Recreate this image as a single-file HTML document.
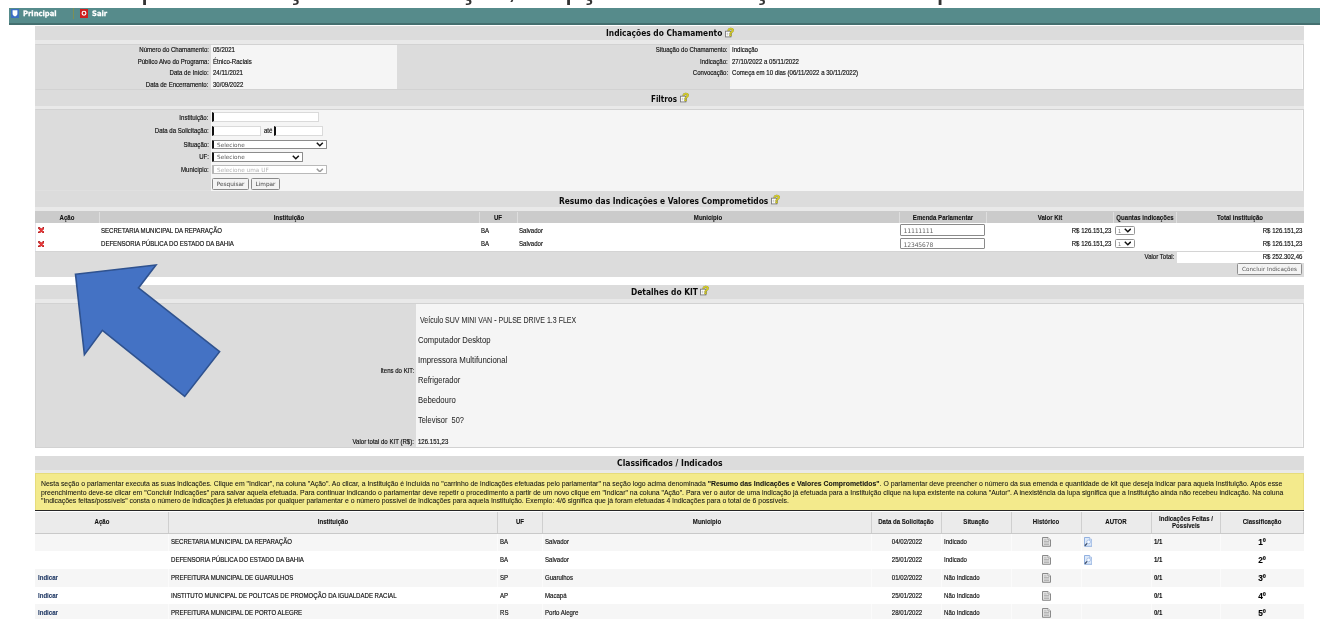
<!DOCTYPE html>
<html lang="pt-BR"><head><meta charset="utf-8"><title>Indicações do Chamamento</title>
<style>
html,body{margin:0;padding:0;background:#fff}
#page{position:absolute;left:0;top:0;width:1328px;height:642px;overflow:hidden;will-change:transform}
body{width:1328px;height:642px;overflow:hidden;position:relative;font-family:"Liberation Sans",sans-serif;font-size:7.4px;color:#111}
.b{position:absolute;box-sizing:border-box}
.t{position:absolute;white-space:pre;display:block;-webkit-text-stroke:.18px currentColor}
.bd{font-weight:bold}
.yp{-webkit-text-stroke:.06px currentColor}
.bd,.lnk{-webkit-text-stroke:.1px currentColor}
.hd{position:absolute;margin:0;white-space:nowrap;font:bold 9.2px/14px "DejaVu Sans Condensed","DejaVu Sans","Liberation Sans",sans-serif;color:#0a0a0a;transform-origin:0 50%}
.nav{position:absolute;left:9px;top:8px;width:1311px;height:17px;background:#568b8b;border-bottom:2px solid #446f6f;box-sizing:border-box}
.nv{position:absolute;white-space:nowrap;font:bold 7.4px/10px "DejaVu Sans",sans-serif;color:#fff;transform-origin:0 50%;transform:scaleX(.92);-webkit-text-stroke:.25px #fff}
.kit{font-size:9.4px;color:#2a2a2a;-webkit-text-stroke:.05px currentColor}
.in{position:absolute;box-sizing:border-box;background:#fff;border:1px solid #dadada;border-left:2px solid #111;margin:0;padding:0 2px;outline:0;border-radius:0;font:6px "Liberation Sans",sans-serif}
.sel{position:absolute;box-sizing:border-box;background:#fff;border:1px solid #8c8c8c;border-left:2px solid #111;border-radius:1px}
.btn{position:absolute;box-sizing:border-box;background:#f3f3f3;border:1px solid #8a8a8a;border-radius:1.5px;margin:0;padding:0 0 1px;line-height:8px;text-align:center;white-space:nowrap;overflow:hidden}
.sm{font-family:"DejaVu Sans","Liberation Sans",sans-serif;font-size:5.75px;color:#666}
.lnk{color:#1f3864;font-weight:bold;text-decoration:none}
.em{position:absolute;box-sizing:border-box;width:85px;height:11.5px;margin:0;padding:1px 0 0 2.6px;outline:0;background:#fff;border:1px solid #8a8a8a;border-radius:1px;font:6.3px "DejaVu Sans Mono","Liberation Mono",monospace;letter-spacing:-.1px;color:#666}
</style></head><body>
<div id="page">

<div class="b" style="left:0;top:-29.2px;width:1328px;height:36px;overflow:hidden;font:32px/32px 'Liberation Sans',sans-serif;color:#333">
<span style="position:absolute;left:140.9px;top:0">p</span>
<span style="position:absolute;left:287px;top:0">ç</span>
<span style="position:absolute;left:459.8px;top:0">ç</span>
<span style="position:absolute;left:507.6px;top:0">,</span>
<span style="position:absolute;left:564.9px;top:0">p</span>
<span style="position:absolute;left:580.4px;top:0">ç</span>
<span style="position:absolute;left:753.3px;top:0">ç</span>
<span style="position:absolute;left:936.4px;top:0">p</span>
</div>
<div class="nav">
<svg style="position:absolute;left:1.6px;top:1px" width="8" height="9" viewBox="0 0 8 9"><rect width="8" height="9" fill="#3b6fc4"/><path d="M1.6 1.2h4.8v3.6c0 1.3-1.2 2.2-2.4 2.6C2.8 7 1.6 6.100 1.600 4.800z" fill="#fff"/></svg>
<span class="nv" style="left:14.2px;top:0.6px">Principal</span>
<div class="b" style="left:63.6px;top:0;width:1px;height:11px;background:#7d8f55"></div>
<svg style="position:absolute;left:71px;top:.6px" width="8" height="9.2" viewBox="0 0 8 9.2"><rect width="8" height="9.2" fill="#cf1f1f"/><circle cx="4" cy="4.200" r="1.900" fill="none" stroke="#fff" stroke-width="1.150"/></svg>
<span class="nv" style="left:83px;top:0.6px">Sair</span>
</div>
<div class="b " style="left:35.00px;top:26.00px;width:1269.00px;height:14.00px;background:#dcdcdc;"></div>
<div class="b " style="left:35.00px;top:40.00px;width:1269.00px;height:4.00px;background:#e9e9e9;"></div>
<h2 class="hd" style="left:605.80px;top:26.31px;transform:scaleX(0.9079)">Indicações do Chamamento</h2>
<svg class="hi" style="position:absolute;left:724.80px;top:26.70px" width="10" height="11" viewBox="0 0 10 11"><rect x=".5" y="4.200" width="5.400" height="5.700" fill="#fff" stroke="#7a7a7a" stroke-width=".9"/><path d="M1.700 6.300h1.600M1.700 7.800h1.600" stroke="#a0a0a0" stroke-width=".7"/><text x="2.300" y="9.200" font-family="Liberation Sans, sans-serif" font-weight="bold" font-size="11.500" fill="#d6cd1d" stroke="#6e6a10" stroke-width=".5" paint-order="stroke">?</text></svg>
<div class="b " style="left:35.00px;top:44.00px;width:1269.00px;height:46.00px;background:#dcdcdc;border:1px solid #d2d2d2;border-left-color:#dcdcdc"></div>
<div class="b " style="left:211.00px;top:45.00px;width:186.00px;height:44.00px;background:#f5f5f5;"></div>
<div class="b " style="left:730.00px;top:45.00px;width:573.00px;height:44.00px;background:#f5f5f5;border-right:1px solid #fafafa"></div>
<span class="t " style="top:45.40px;line-height:10px;right:1119.25px;transform-origin:100% 50%;transform:scaleX(0.82);">Número do Chamamento:</span>
<span class="t " style="top:45.40px;line-height:10px;left:212.75px;transform-origin:0 50%;transform:scaleX(0.82);">05/2021</span>
<span class="t " style="top:56.82px;line-height:10px;right:1119.25px;transform-origin:100% 50%;transform:scaleX(0.82);">Público Alvo do Programa:</span>
<span class="t " style="top:56.82px;line-height:10px;left:212.75px;transform-origin:0 50%;transform:scaleX(0.82);">Étnico-Raciais</span>
<span class="t " style="top:68.24px;line-height:10px;right:1119.25px;transform-origin:100% 50%;transform:scaleX(0.82);">Data de Início:</span>
<span class="t " style="top:68.24px;line-height:10px;left:212.75px;transform-origin:0 50%;transform:scaleX(0.82);">24/11/2021</span>
<span class="t " style="top:79.66px;line-height:10px;right:1119.25px;transform-origin:100% 50%;transform:scaleX(0.82);">Data de Encerramento:</span>
<span class="t " style="top:79.66px;line-height:10px;left:212.75px;transform-origin:0 50%;transform:scaleX(0.82);">30/09/2022</span>
<span class="t " style="top:45.40px;line-height:10px;right:600.20px;transform-origin:100% 50%;transform:scaleX(0.82);">Situação do Chamamento:</span>
<span class="t " style="top:45.40px;line-height:10px;left:732.00px;transform-origin:0 50%;transform:scaleX(0.82);">Indicação</span>
<span class="t " style="top:56.82px;line-height:10px;right:600.20px;transform-origin:100% 50%;transform:scaleX(0.82);">Indicação:</span>
<span class="t " style="top:56.82px;line-height:10px;left:732.00px;transform-origin:0 50%;transform:scaleX(0.82);">27/10/2022 a 05/11/2022</span>
<span class="t " style="top:68.24px;line-height:10px;right:600.20px;transform-origin:100% 50%;transform:scaleX(0.82);">Convocação:</span>
<span class="t " style="top:68.24px;line-height:10px;left:732.00px;transform-origin:0 50%;transform:scaleX(0.82);">Começa em 10 dias (06/11/2022 a 30/11/2022)</span>
<div class="b " style="left:35.00px;top:90.00px;width:1269.00px;height:16.00px;background:#dcdcdc;"></div>
<div class="b " style="left:35.00px;top:106.00px;width:1269.00px;height:3.00px;background:#e9e9e9;"></div>
<h2 class="hd" style="left:651.00px;top:91.61px;transform:scaleX(0.868)">Filtros</h2>
<svg class="hi" style="position:absolute;left:679.70px;top:92.00px" width="10" height="11" viewBox="0 0 10 11"><rect x=".5" y="4.200" width="5.400" height="5.700" fill="#fff" stroke="#7a7a7a" stroke-width=".9"/><path d="M1.700 6.300h1.600M1.700 7.800h1.600" stroke="#a0a0a0" stroke-width=".7"/><text x="2.300" y="9.200" font-family="Liberation Sans, sans-serif" font-weight="bold" font-size="11.500" fill="#d6cd1d" stroke="#6e6a10" stroke-width=".5" paint-order="stroke">?</text></svg>
<div class="b " style="left:35.00px;top:109.00px;width:1269.00px;height:82.00px;background:#dcdcdc;border:1px solid #d2d2d2;border-left-color:#dcdcdc;border-bottom-color:#e0e0e0"></div>
<div class="b " style="left:211.00px;top:110.00px;width:1092.00px;height:81.00px;background:#f5f5f5;border-right:1px solid #fafafa"></div>
<span class="t " style="top:112.90px;line-height:10px;right:1119.25px;transform-origin:100% 50%;transform:scaleX(0.82);">Instituição:</span>
<span class="t " style="top:126.15px;line-height:10px;right:1119.25px;transform-origin:100% 50%;transform:scaleX(0.82);">Data da Solicitação:</span>
<span class="t " style="top:140.15px;line-height:10px;right:1119.25px;transform-origin:100% 50%;transform:scaleX(0.82);">Situação:</span>
<span class="t " style="top:152.40px;line-height:10px;right:1119.25px;transform-origin:100% 50%;transform:scaleX(0.82);">UF:</span>
<span class="t " style="top:165.40px;line-height:10px;right:1119.25px;transform-origin:100% 50%;transform:scaleX(0.82);">Município:</span>
<input type="text" class="in" aria-label="Instituição" style="left:212px;top:112px;width:107px;height:10px">
<input type="text" class="in" aria-label="Data inicial" style="left:212px;top:126px;width:49.4px;height:10px">
<span class="t " style="top:125.90px;line-height:10px;left:263.75px;transform-origin:0 50%;transform:scaleX(0.82);">até</span>
<input type="text" class="in" aria-label="Data final" style="left:274px;top:126px;width:48.6px;height:10px">
<div class="sel" style="left:212px;top:140px;width:115px;height:9px;"><span class="sm" style="position:absolute;left:3px;top:50%;margin-top:-4px;line-height:8px;color:#5a5a5a;white-space:nowrap">Selecione</span><svg style="position:absolute;right:2.4px;top:50%;margin-top:-2.2px" width="7.6" height="4.8" viewBox="0 0 7.6 4.8"><path d="M.8 .8L3.800 3.800 6.800 .8" fill="none" stroke="#111" stroke-width="1.5"/></svg></div>
<div class="sel" style="left:212px;top:152px;width:91px;height:10px;"><span class="sm" style="position:absolute;left:3px;top:50%;margin-top:-4px;line-height:8px;color:#5a5a5a;white-space:nowrap">Selecione</span><svg style="position:absolute;right:2.4px;top:50%;margin-top:-2.2px" width="7.6" height="4.8" viewBox="0 0 7.6 4.8"><path d="M.8 .8L3.800 3.800 6.800 .8" fill="none" stroke="#111" stroke-width="1.5"/></svg></div>
<div class="sel" style="left:212px;top:165px;width:115px;height:9.4px;border-color:#b9b9b9;border-left:2px solid #b4b4b4;"><span class="sm" style="position:absolute;left:3px;top:50%;margin-top:-4px;line-height:8px;color:#b3b3b3;white-space:nowrap">Selecione uma UF</span><svg style="position:absolute;right:2.4px;top:50%;margin-top:-2.2px" width="7.6" height="4.8" viewBox="0 0 7.6 4.8"><path d="M.8 .8L3.800 3.800 6.800 .8" fill="none" stroke="#9a9a9a" stroke-width="1.5"/></svg></div>
<button type="button" class="btn sm" style="left:212px;top:178px;width:37px;height:12px;color:#444">Pesquisar</button>
<button type="button" class="btn sm" style="left:251px;top:178px;width:29px;height:12px;color:#444">Limpar</button>
<div class="b " style="left:35.00px;top:191.00px;width:1269.00px;height:16.00px;background:#dcdcdc;"></div>
<div class="b " style="left:35.00px;top:207.00px;width:1269.00px;height:4.00px;background:#e9e9e9;"></div>
<h2 class="hd" style="left:559.40px;top:193.91px;transform:scaleX(0.9064)">Resumo das Indicações e Valores Comprometidos</h2>
<svg class="hi" style="position:absolute;left:771.40px;top:194.30px" width="10" height="11" viewBox="0 0 10 11"><rect x=".5" y="4.200" width="5.400" height="5.700" fill="#fff" stroke="#7a7a7a" stroke-width=".9"/><path d="M1.700 6.300h1.600M1.700 7.800h1.600" stroke="#a0a0a0" stroke-width=".7"/><text x="2.300" y="9.200" font-family="Liberation Sans, sans-serif" font-weight="bold" font-size="11.500" fill="#d6cd1d" stroke="#6e6a10" stroke-width=".5" paint-order="stroke">?</text></svg>
<div class="b " style="left:35.00px;top:211.00px;width:1269.00px;height:12.00px;background:#cbcbcb;"></div>
<div class="b " style="left:99.00px;top:212.00px;width:1.00px;height:11.00px;background:#dedede;"></div>
<div class="b " style="left:479.00px;top:212.00px;width:1.00px;height:11.00px;background:#dedede;"></div>
<div class="b " style="left:517.00px;top:212.00px;width:1.00px;height:11.00px;background:#dedede;"></div>
<div class="b " style="left:899.00px;top:212.00px;width:1.00px;height:11.00px;background:#dedede;"></div>
<div class="b " style="left:986.00px;top:212.00px;width:1.00px;height:11.00px;background:#dedede;"></div>
<div class="b " style="left:1113.00px;top:212.00px;width:1.00px;height:11.00px;background:#dedede;"></div>
<div class="b " style="left:1176.00px;top:212.00px;width:1.00px;height:11.00px;background:#dedede;"></div>
<span class="t bd" style="top:212.90px;line-height:10px;left:67.12px;transform-origin:0 50%;transform:scaleX(0.82) translateX(-50%);">Ação</span>
<span class="t bd" style="top:212.90px;line-height:10px;left:289.25px;transform-origin:0 50%;transform:scaleX(0.82) translateX(-50%);">Instituição</span>
<span class="t bd" style="top:212.90px;line-height:10px;left:498.38px;transform-origin:0 50%;transform:scaleX(0.82) translateX(-50%);">UF</span>
<span class="t bd" style="top:212.90px;line-height:10px;left:708.25px;transform-origin:0 50%;transform:scaleX(0.82) translateX(-50%);">Município</span>
<span class="t bd" style="top:212.90px;line-height:10px;left:942.62px;transform-origin:0 50%;transform:scaleX(0.82) translateX(-50%);">Emenda Parlamentar</span>
<span class="t bd" style="top:212.90px;line-height:10px;left:1049.62px;transform-origin:0 50%;transform:scaleX(0.82) translateX(-50%);">Valor Kit</span>
<span class="t bd" style="top:212.90px;line-height:10px;left:1144.75px;transform-origin:0 50%;transform:scaleX(0.82) translateX(-50%);">Quantas indicações</span>
<span class="t bd" style="top:212.90px;line-height:10px;left:1240.00px;transform-origin:0 50%;transform:scaleX(0.82) translateX(-50%);">Total instituição</span>
<div class="b " style="left:35.00px;top:223.00px;width:1269.00px;height:28.00px;background:#fff;border-left:1px solid #e4e6ee"></div>
<svg style="position:absolute;left:37.8px;top:226.8px" width="6.6" height="6.6" viewBox="0 0 10 10"><path d="M1.6 1.6L8.4 8.4M8.4 1.6L1.6 8.4" stroke="#a51d1d" stroke-width="3.2" stroke-linecap="round"/><path d="M2.6 2.6L7.4 7.4M7.4 2.6L2.6 7.4" stroke="#e8383a" stroke-width="2.6" stroke-linecap="round"/></svg>
<span class="t " style="top:225.50px;line-height:10px;left:100.50px;transform-origin:0 50%;transform:scaleX(0.82);">SECRETARIA MUNICIPAL DA REPARAÇÃO</span>
<span class="t " style="top:225.50px;line-height:10px;left:480.50px;transform-origin:0 50%;transform:scaleX(0.82);">BA</span>
<span class="t " style="top:225.50px;line-height:10px;left:518.75px;transform-origin:0 50%;transform:scaleX(0.82);">Salvador</span>
<input type="text" class="em" aria-label="Emenda Parlamentar" value="11111111" style="left:900px;top:224.2px">
<span class="t " style="top:225.50px;line-height:10px;right:216.25px;transform-origin:100% 50%;transform:scaleX(0.82);">R$ 126.151,23</span>
<div class="sel" style="left:1114.5px;top:226px;width:20.2px;height:9px;border:1px solid #959595;border-radius:1.5px"><span class="sm" style="position:absolute;left:2.5px;top:.5px;line-height:6px;font-size:5px;color:#777">1</span><svg style="position:absolute;right:2.4px;top:50%;margin-top:-2.2px" width="7.6" height="4.8" viewBox="0 0 7.6 4.8"><path d="M.8 .8L3.800 3.800 6.800 .8" fill="none" stroke="#111" stroke-width="1.5"/></svg></div>
<span class="t " style="top:225.50px;line-height:10px;right:26.00px;transform-origin:100% 50%;transform:scaleX(0.82);">R$ 126.151,23</span>
<svg style="position:absolute;left:37.8px;top:240.5px" width="6.6" height="6.6" viewBox="0 0 10 10"><path d="M1.6 1.6L8.4 8.4M8.4 1.6L1.6 8.4" stroke="#a51d1d" stroke-width="3.2" stroke-linecap="round"/><path d="M2.6 2.6L7.4 7.4M7.4 2.6L2.6 7.4" stroke="#e8383a" stroke-width="2.6" stroke-linecap="round"/></svg>
<span class="t " style="top:239.20px;line-height:10px;left:100.50px;transform-origin:0 50%;transform:scaleX(0.82);">DEFENSORIA PÚBLICA DO ESTADO DA BAHIA</span>
<span class="t " style="top:239.20px;line-height:10px;left:480.50px;transform-origin:0 50%;transform:scaleX(0.82);">BA</span>
<span class="t " style="top:239.20px;line-height:10px;left:518.75px;transform-origin:0 50%;transform:scaleX(0.82);">Salvador</span>
<input type="text" class="em" aria-label="Emenda Parlamentar" value="12345678" style="left:900px;top:237.9px">
<span class="t " style="top:239.20px;line-height:10px;right:216.25px;transform-origin:100% 50%;transform:scaleX(0.82);">R$ 126.151,23</span>
<div class="sel" style="left:1114.5px;top:239px;width:20.2px;height:9px;border:1px solid #959595;border-radius:1.5px"><span class="sm" style="position:absolute;left:2.5px;top:.5px;line-height:6px;font-size:5px;color:#777">1</span><svg style="position:absolute;right:2.4px;top:50%;margin-top:-2.2px" width="7.6" height="4.8" viewBox="0 0 7.6 4.8"><path d="M.8 .8L3.800 3.800 6.800 .8" fill="none" stroke="#111" stroke-width="1.5"/></svg></div>
<span class="t " style="top:239.20px;line-height:10px;right:26.00px;transform-origin:100% 50%;transform:scaleX(0.82);">R$ 126.151,23</span>
<div class="b " style="left:35.00px;top:251.00px;width:1269.00px;height:26.00px;background:#dcdcdc;border-top:1px solid #d4d4d4"></div>
<div class="b " style="left:1177.00px;top:252.00px;width:127.00px;height:11.00px;background:#fff;"></div>
<span class="t " style="top:252.30px;line-height:10px;right:153.25px;transform-origin:100% 50%;transform:scaleX(0.82);">Valor Total:</span>
<span class="t " style="top:252.30px;line-height:10px;right:26.00px;transform-origin:100% 50%;transform:scaleX(0.82);">R$ 252.302,46</span>
<button type="button" class="btn sm" style="left:1237px;top:263px;width:65px;height:12px;border-color:#8f8f8f;color:#555;font-size:5.65px">Concluir Indicações</button>
<div class="b " style="left:35.00px;top:285.00px;width:1269.00px;height:14.00px;background:#dcdcdc;"></div>
<div class="b " style="left:35.00px;top:299.00px;width:1269.00px;height:4.00px;background:#e9e9e9;"></div>
<h2 class="hd" style="left:630.50px;top:285.01px;transform:scaleX(0.9089)">Detalhes do KIT</h2>
<svg class="hi" style="position:absolute;left:700.20px;top:285.40px" width="10" height="11" viewBox="0 0 10 11"><rect x=".5" y="4.200" width="5.400" height="5.700" fill="#fff" stroke="#7a7a7a" stroke-width=".9"/><path d="M1.700 6.300h1.600M1.700 7.800h1.600" stroke="#a0a0a0" stroke-width=".7"/><text x="2.300" y="9.200" font-family="Liberation Sans, sans-serif" font-weight="bold" font-size="11.500" fill="#d6cd1d" stroke="#6e6a10" stroke-width=".5" paint-order="stroke">?</text></svg>
<div class="b " style="left:35.00px;top:303.00px;width:1269.00px;height:145.00px;background:#dcdcdc;border:1px solid #d2d2d2"></div>
<div class="b " style="left:416.00px;top:304.00px;width:887.00px;height:143.00px;background:#f5f5f5;border-right:1px solid #fafafa"></div>
<span class="t kit" style="top:313.90px;line-height:12px;left:419.50px;transform-origin:0 50%;transform:scaleX(0.7504);">Veículo SUV MINI VAN - PULSE DRIVE 1.3 FLEX</span>
<span class="t kit" style="top:333.90px;line-height:12px;left:417.75px;transform-origin:0 50%;transform:scaleX(0.8183);">Computador Desktop</span>
<span class="t kit" style="top:353.90px;line-height:12px;left:417.75px;transform-origin:0 50%;transform:scaleX(0.8355);">Impressora Multifuncional</span>
<span class="t kit" style="top:373.90px;line-height:12px;left:417.75px;transform-origin:0 50%;transform:scaleX(0.8108);">Refrigerador</span>
<span class="t kit" style="top:393.90px;line-height:12px;left:417.75px;transform-origin:0 50%;transform:scaleX(0.8229);">Bebedouro</span>
<span class="t kit" style="top:413.90px;line-height:12px;left:417.75px;transform-origin:0 50%;transform:scaleX(0.7952);">Televisor  50?</span>
<span class="t " style="top:365.70px;line-height:10px;right:913.75px;transform-origin:100% 50%;transform:scaleX(0.82);">Itens do KIT:</span>
<span class="t " style="top:436.70px;line-height:10px;right:913.75px;transform-origin:100% 50%;transform:scaleX(0.82);">Valor total do KIT (R$):</span>
<span class="t " style="top:436.70px;line-height:10px;left:418.25px;transform-origin:0 50%;transform:scaleX(0.82);">126.151,23</span>
<div class="b " style="left:35.00px;top:456.00px;width:1269.00px;height:14.00px;background:#dcdcdc;"></div>
<div class="b " style="left:35.00px;top:470.00px;width:1269.00px;height:3.00px;background:#e9e9e9;"></div>
<h2 class="hd" style="left:616.80px;top:456.01px;transform:scaleX(0.9275)">Classificados / Indicados</h2>
<div class="b " style="left:35.00px;top:473.00px;width:1269.00px;height:38.00px;background:#f3ea8c;border:1px solid #e6dc7c;border-bottom:none"></div>
<div class="b " style="left:35.00px;top:510.00px;width:1269.00px;height:1.00px;background:#262626;"></div>
<span class="t yp" style="top:479.40px;line-height:10px;left:40.50px;transform-origin:0 50%;transform:scaleX(0.9319);">Nesta seção o parlamentar executa as suas indicações. Clique em "Indicar", na coluna "Ação". Ao clicar, a Instituição é incluída no "carrinho de indicações efetuadas pelo parlamentar" na seção logo acima denominada <b>"Resumo das Indicações e Valores Comprometidos"</b>. O parlamentar deve preencher o número da sua emenda e quantidade de kit que deseja indicar para aquela Instituição. Após esse</span>
<span class="t yp" style="top:487.75px;line-height:10px;left:40.50px;transform-origin:0 50%;transform:scaleX(0.9304);">preenchimento deve-se clicar em "Concluir Indicações" para salvar aquela efetuada. Para continuar indicando o parlamentar deve repetir o procedimento a partir de um novo clique em "Indicar" na coluna "Ação". Para ver o autor de uma indicação já efetuada para a Instituição clique na lupa existente na coluna "Autor". A inexistência da lupa significa que a Instituição ainda não recebeu indicação. Na coluna</span>
<span class="t yp" style="top:496.10px;line-height:10px;left:40.50px;transform-origin:0 50%;transform:scaleX(0.9298);">"Indicações feitas/possíveis" consta o número de indicações já efetuadas por qualquer parlamentar e o número possível de indicações para aquela Instituição. Exemplo: 4/6 significa que já foram efetuadas 4 indicações para o total de 6 possíveis.</span>
<div class="b " style="left:35.00px;top:512.00px;width:1269.00px;height:22.00px;background:#ebebeb;border-bottom:1px solid #c9c9c9"></div>
<div class="b " style="left:168.00px;top:512.00px;width:1.00px;height:21.00px;background:#cfcfcf;"></div>
<div class="b " style="left:497.00px;top:512.00px;width:1.00px;height:21.00px;background:#cfcfcf;"></div>
<div class="b " style="left:542.00px;top:512.00px;width:1.00px;height:21.00px;background:#cfcfcf;"></div>
<div class="b " style="left:871.00px;top:512.00px;width:1.00px;height:21.00px;background:#cfcfcf;"></div>
<div class="b " style="left:941.00px;top:512.00px;width:1.00px;height:21.00px;background:#cfcfcf;"></div>
<div class="b " style="left:1011.00px;top:512.00px;width:1.00px;height:21.00px;background:#cfcfcf;"></div>
<div class="b " style="left:1081.00px;top:512.00px;width:1.00px;height:21.00px;background:#cfcfcf;"></div>
<div class="b " style="left:1151.00px;top:512.00px;width:1.00px;height:21.00px;background:#cfcfcf;"></div>
<div class="b " style="left:1220.00px;top:512.00px;width:1.00px;height:21.00px;background:#cfcfcf;"></div>
<div class="b " style="left:1303.00px;top:512.00px;width:1.00px;height:21.00px;background:#cfcfcf;"></div>
<span class="t bd" style="top:517.40px;line-height:10px;left:101.62px;transform-origin:0 50%;transform:scaleX(0.82) translateX(-50%);">Ação</span>
<span class="t bd" style="top:517.40px;line-height:10px;left:332.77px;transform-origin:0 50%;transform:scaleX(0.82) translateX(-50%);">Instituição</span>
<span class="t bd" style="top:517.40px;line-height:10px;left:519.80px;transform-origin:0 50%;transform:scaleX(0.82) translateX(-50%);">UF</span>
<span class="t bd" style="top:517.40px;line-height:10px;left:706.85px;transform-origin:0 50%;transform:scaleX(0.82) translateX(-50%);">Município</span>
<span class="t bd" style="top:517.40px;line-height:10px;left:906.35px;transform-origin:0 50%;transform:scaleX(0.82) translateX(-50%);">Data da Solicitação</span>
<span class="t bd" style="top:517.40px;line-height:10px;left:976.40px;transform-origin:0 50%;transform:scaleX(0.82) translateX(-50%);">Situação</span>
<span class="t bd" style="top:517.40px;line-height:10px;left:1046.40px;transform-origin:0 50%;transform:scaleX(0.82) translateX(-50%);">Histórico</span>
<span class="t bd" style="top:517.40px;line-height:10px;left:1116.20px;transform-origin:0 50%;transform:scaleX(0.82) translateX(-50%);">AUTOR</span>
<span class="t bd" style="top:517.40px;line-height:10px;left:1262.10px;transform-origin:0 50%;transform:scaleX(0.82) translateX(-50%);">Classificação</span>
<span class="t bd" style="top:514.00px;line-height:10px;left:1185.90px;transform-origin:0 50%;transform:scaleX(0.82) translateX(-50%);">Indicações Feitas /</span>
<span class="t bd" style="top:521.30px;line-height:10px;left:1185.90px;transform-origin:0 50%;transform:scaleX(0.82) translateX(-50%);">Possíveis</span>
<div class="b " style="left:35.00px;top:534.00px;width:1269.00px;height:17.00px;background:#f6f6f6;"></div>
<div class="b " style="left:168.00px;top:534.00px;width:1.00px;height:17.00px;background:#fbfbfb;"></div>
<div class="b " style="left:497.00px;top:534.00px;width:1.00px;height:17.00px;background:#fbfbfb;"></div>
<div class="b " style="left:542.00px;top:534.00px;width:1.00px;height:17.00px;background:#fbfbfb;"></div>
<div class="b " style="left:871.00px;top:534.00px;width:1.00px;height:17.00px;background:#fbfbfb;"></div>
<div class="b " style="left:941.00px;top:534.00px;width:1.00px;height:17.00px;background:#fbfbfb;"></div>
<div class="b " style="left:1011.00px;top:534.00px;width:1.00px;height:17.00px;background:#fbfbfb;"></div>
<div class="b " style="left:1081.00px;top:534.00px;width:1.00px;height:17.00px;background:#fbfbfb;"></div>
<div class="b " style="left:1151.00px;top:534.00px;width:1.00px;height:17.00px;background:#fbfbfb;"></div>
<div class="b " style="left:1220.00px;top:534.00px;width:1.00px;height:17.00px;background:#fbfbfb;"></div>
<span class="t " style="top:537.25px;line-height:10px;left:171.25px;transform-origin:0 50%;transform:scaleX(0.82);">SECRETARIA MUNICIPAL DA REPARAÇÃO</span>
<span class="t " style="top:537.25px;line-height:10px;left:500.40px;transform-origin:0 50%;transform:scaleX(0.82);">BA</span>
<span class="t " style="top:537.25px;line-height:10px;left:545.40px;transform-origin:0 50%;transform:scaleX(0.82);">Salvador</span>
<span class="t " style="top:537.25px;line-height:10px;left:906.80px;transform-origin:0 50%;transform:scaleX(0.82) translateX(-50%);">04/02/2022</span>
<span class="t " style="top:537.25px;line-height:10px;left:944.40px;transform-origin:0 50%;transform:scaleX(0.82);">Indicado</span>
<svg style="position:absolute;left:1042px;top:536.9px" width="9" height="10" viewBox="0 0 9 10"><path d="M.5 .5H6L8.500 3V9.300H.5z" fill="#e2e2e2" stroke="#8a8a8a" stroke-width="1"/><path d="M6 .5V3H8.500" fill="#f6f6f6" stroke="#8a8a8a" stroke-width=".7"/><path d="M2 2.900H4.600M2 4.500H7M2 6H7M2 7.500H7" stroke="#a4a4a4" stroke-width=".7"/></svg>
<svg style="position:absolute;left:1084px;top:536.9px" width="8.4" height="10" viewBox="0 0 8.4 10"><path d="M.5 .5H5.600L7.900 2.800V9.300H.5z" fill="#dde9f9" stroke="#88a9dc" stroke-width=".9"/><path d="M5.600 .5V2.800H7.900" fill="#f4f8fe" stroke="#88a9dc" stroke-width=".6"/><circle cx="4.600" cy="4.900" r="1.900" fill="#f6faff" stroke="#9ab8e4" stroke-width=".8"/><path d="M3.100 6.400L.9 8.700" stroke="#3e4c66" stroke-width="1.300"/></svg>
<span class="t bd" style="top:537.25px;line-height:10px;left:1154.30px;transform-origin:0 50%;transform:scaleX(0.82);">1/1</span>
<span class="t bd" style="top:535.85px;line-height:12px;font-size:9.7px;left:1262.40px;transform-origin:0 50%;transform:scaleX(0.86) translateX(-50%);color:#000;">1º</span>
<div class="b " style="left:35.00px;top:551.00px;width:1269.00px;height:18.00px;background:#fff;"></div>
<span class="t " style="top:554.95px;line-height:10px;left:171.25px;transform-origin:0 50%;transform:scaleX(0.82);">DEFENSORIA PÚBLICA DO ESTADO DA BAHIA</span>
<span class="t " style="top:554.95px;line-height:10px;left:500.40px;transform-origin:0 50%;transform:scaleX(0.82);">BA</span>
<span class="t " style="top:554.95px;line-height:10px;left:545.40px;transform-origin:0 50%;transform:scaleX(0.82);">Salvador</span>
<span class="t " style="top:554.95px;line-height:10px;left:906.80px;transform-origin:0 50%;transform:scaleX(0.82) translateX(-50%);">25/01/2022</span>
<span class="t " style="top:554.95px;line-height:10px;left:944.40px;transform-origin:0 50%;transform:scaleX(0.82);">Indicado</span>
<svg style="position:absolute;left:1042px;top:554.6px" width="9" height="10" viewBox="0 0 9 10"><path d="M.5 .5H6L8.500 3V9.300H.5z" fill="#e2e2e2" stroke="#8a8a8a" stroke-width="1"/><path d="M6 .5V3H8.500" fill="#f6f6f6" stroke="#8a8a8a" stroke-width=".7"/><path d="M2 2.900H4.600M2 4.500H7M2 6H7M2 7.500H7" stroke="#a4a4a4" stroke-width=".7"/></svg>
<svg style="position:absolute;left:1084px;top:554.6px" width="8.4" height="10" viewBox="0 0 8.4 10"><path d="M.5 .5H5.600L7.900 2.800V9.300H.5z" fill="#dde9f9" stroke="#88a9dc" stroke-width=".9"/><path d="M5.600 .5V2.800H7.900" fill="#f4f8fe" stroke="#88a9dc" stroke-width=".6"/><circle cx="4.600" cy="4.900" r="1.900" fill="#f6faff" stroke="#9ab8e4" stroke-width=".8"/><path d="M3.100 6.400L.9 8.700" stroke="#3e4c66" stroke-width="1.300"/></svg>
<span class="t bd" style="top:554.95px;line-height:10px;left:1154.30px;transform-origin:0 50%;transform:scaleX(0.82);">1/1</span>
<span class="t bd" style="top:553.55px;line-height:12px;font-size:9.7px;left:1262.40px;transform-origin:0 50%;transform:scaleX(0.86) translateX(-50%);color:#000;">2º</span>
<div class="b " style="left:35.00px;top:569.00px;width:1269.00px;height:18.00px;background:#f6f6f6;"></div>
<div class="b " style="left:168.00px;top:569.00px;width:1.00px;height:18.00px;background:#fbfbfb;"></div>
<div class="b " style="left:497.00px;top:569.00px;width:1.00px;height:18.00px;background:#fbfbfb;"></div>
<div class="b " style="left:542.00px;top:569.00px;width:1.00px;height:18.00px;background:#fbfbfb;"></div>
<div class="b " style="left:871.00px;top:569.00px;width:1.00px;height:18.00px;background:#fbfbfb;"></div>
<div class="b " style="left:941.00px;top:569.00px;width:1.00px;height:18.00px;background:#fbfbfb;"></div>
<div class="b " style="left:1011.00px;top:569.00px;width:1.00px;height:18.00px;background:#fbfbfb;"></div>
<div class="b " style="left:1081.00px;top:569.00px;width:1.00px;height:18.00px;background:#fbfbfb;"></div>
<div class="b " style="left:1151.00px;top:569.00px;width:1.00px;height:18.00px;background:#fbfbfb;"></div>
<div class="b " style="left:1220.00px;top:569.00px;width:1.00px;height:18.00px;background:#fbfbfb;"></div>
<a class="t lnk" style="top:572.95px;line-height:10px;left:38.25px;transform-origin:0 50%;transform:scaleX(0.82);">Indicar</a>
<span class="t " style="top:572.95px;line-height:10px;left:171.25px;transform-origin:0 50%;transform:scaleX(0.82);">PREFEITURA MUNICIPAL DE GUARULHOS</span>
<span class="t " style="top:572.95px;line-height:10px;left:500.40px;transform-origin:0 50%;transform:scaleX(0.82);">SP</span>
<span class="t " style="top:572.95px;line-height:10px;left:545.40px;transform-origin:0 50%;transform:scaleX(0.82);">Guarulhos</span>
<span class="t " style="top:572.95px;line-height:10px;left:906.80px;transform-origin:0 50%;transform:scaleX(0.82) translateX(-50%);">01/02/2022</span>
<span class="t " style="top:572.95px;line-height:10px;left:944.40px;transform-origin:0 50%;transform:scaleX(0.82);">Não Indicado</span>
<svg style="position:absolute;left:1042px;top:572.5px" width="9" height="10" viewBox="0 0 9 10"><path d="M.5 .5H6L8.500 3V9.300H.5z" fill="#e2e2e2" stroke="#8a8a8a" stroke-width="1"/><path d="M6 .5V3H8.500" fill="#f6f6f6" stroke="#8a8a8a" stroke-width=".7"/><path d="M2 2.900H4.600M2 4.500H7M2 6H7M2 7.500H7" stroke="#a4a4a4" stroke-width=".7"/></svg>
<span class="t bd" style="top:572.95px;line-height:10px;left:1154.30px;transform-origin:0 50%;transform:scaleX(0.82);">0/1</span>
<span class="t bd" style="top:571.55px;line-height:12px;font-size:9.7px;left:1262.40px;transform-origin:0 50%;transform:scaleX(0.86) translateX(-50%);color:#000;">3º</span>
<div class="b " style="left:35.00px;top:587.00px;width:1269.00px;height:17.00px;background:#fff;"></div>
<a class="t lnk" style="top:591.05px;line-height:10px;left:38.25px;transform-origin:0 50%;transform:scaleX(0.82);">Indicar</a>
<span class="t " style="top:591.05px;line-height:10px;left:171.25px;transform-origin:0 50%;transform:scaleX(0.82);">INSTITUTO MUNICIPAL DE POLITCAS DE PROMOÇÃO DA IGUALDADE RACIAL</span>
<span class="t " style="top:591.05px;line-height:10px;left:500.40px;transform-origin:0 50%;transform:scaleX(0.82);">AP</span>
<span class="t " style="top:591.05px;line-height:10px;left:545.40px;transform-origin:0 50%;transform:scaleX(0.82);">Macapá</span>
<span class="t " style="top:591.05px;line-height:10px;left:906.80px;transform-origin:0 50%;transform:scaleX(0.82) translateX(-50%);">25/01/2022</span>
<span class="t " style="top:591.05px;line-height:10px;left:944.40px;transform-origin:0 50%;transform:scaleX(0.82);">Não Indicado</span>
<svg style="position:absolute;left:1042px;top:590.7px" width="9" height="10" viewBox="0 0 9 10"><path d="M.5 .5H6L8.500 3V9.300H.5z" fill="#e2e2e2" stroke="#8a8a8a" stroke-width="1"/><path d="M6 .5V3H8.500" fill="#f6f6f6" stroke="#8a8a8a" stroke-width=".7"/><path d="M2 2.900H4.600M2 4.500H7M2 6H7M2 7.500H7" stroke="#a4a4a4" stroke-width=".7"/></svg>
<span class="t bd" style="top:591.05px;line-height:10px;left:1154.30px;transform-origin:0 50%;transform:scaleX(0.82);">0/1</span>
<span class="t bd" style="top:589.65px;line-height:12px;font-size:9.7px;left:1262.40px;transform-origin:0 50%;transform:scaleX(0.86) translateX(-50%);color:#000;">4º</span>
<div class="b " style="left:35.00px;top:604.00px;width:1269.00px;height:15.00px;background:#f6f6f6;"></div>
<div class="b " style="left:168.00px;top:604.00px;width:1.00px;height:15.00px;background:#fbfbfb;"></div>
<div class="b " style="left:497.00px;top:604.00px;width:1.00px;height:15.00px;background:#fbfbfb;"></div>
<div class="b " style="left:542.00px;top:604.00px;width:1.00px;height:15.00px;background:#fbfbfb;"></div>
<div class="b " style="left:871.00px;top:604.00px;width:1.00px;height:15.00px;background:#fbfbfb;"></div>
<div class="b " style="left:941.00px;top:604.00px;width:1.00px;height:15.00px;background:#fbfbfb;"></div>
<div class="b " style="left:1011.00px;top:604.00px;width:1.00px;height:15.00px;background:#fbfbfb;"></div>
<div class="b " style="left:1081.00px;top:604.00px;width:1.00px;height:15.00px;background:#fbfbfb;"></div>
<div class="b " style="left:1151.00px;top:604.00px;width:1.00px;height:15.00px;background:#fbfbfb;"></div>
<div class="b " style="left:1220.00px;top:604.00px;width:1.00px;height:15.00px;background:#fbfbfb;"></div>
<a class="t lnk" style="top:608.05px;line-height:10px;left:38.25px;transform-origin:0 50%;transform:scaleX(0.82);">Indicar</a>
<span class="t " style="top:608.05px;line-height:10px;left:171.25px;transform-origin:0 50%;transform:scaleX(0.82);">PREFEITURA MUNICIPAL DE PORTO ALEGRE</span>
<span class="t " style="top:608.05px;line-height:10px;left:500.40px;transform-origin:0 50%;transform:scaleX(0.82);">RS</span>
<span class="t " style="top:608.05px;line-height:10px;left:545.40px;transform-origin:0 50%;transform:scaleX(0.82);">Porto Alegre</span>
<span class="t " style="top:608.05px;line-height:10px;left:906.80px;transform-origin:0 50%;transform:scaleX(0.82) translateX(-50%);">28/01/2022</span>
<span class="t " style="top:608.05px;line-height:10px;left:944.40px;transform-origin:0 50%;transform:scaleX(0.82);">Não Indicado</span>
<svg style="position:absolute;left:1042px;top:607.6px" width="9" height="10" viewBox="0 0 9 10"><path d="M.5 .5H6L8.500 3V9.300H.5z" fill="#e2e2e2" stroke="#8a8a8a" stroke-width="1"/><path d="M6 .5V3H8.500" fill="#f6f6f6" stroke="#8a8a8a" stroke-width=".7"/><path d="M2 2.900H4.600M2 4.500H7M2 6H7M2 7.500H7" stroke="#a4a4a4" stroke-width=".7"/></svg>
<span class="t bd" style="top:608.05px;line-height:10px;left:1154.30px;transform-origin:0 50%;transform:scaleX(0.82);">0/1</span>
<span class="t bd" style="top:606.65px;line-height:12px;font-size:9.7px;left:1262.40px;transform-origin:0 50%;transform:scaleX(0.86) translateX(-50%);color:#000;">5º</span>
<svg style="position:absolute;left:0;top:0" width="1328" height="642" viewBox="0 0 1328 642"><polygon points="75.5,274.2 156,265 138.5,287.9 219.600,351.700 184.700,396.400 102.400,330.300 84.400,354.700" fill="#4472c4" stroke="#2f528f" stroke-width="1.6" stroke-linejoin="miter"/></svg>
</div>
</body></html>
